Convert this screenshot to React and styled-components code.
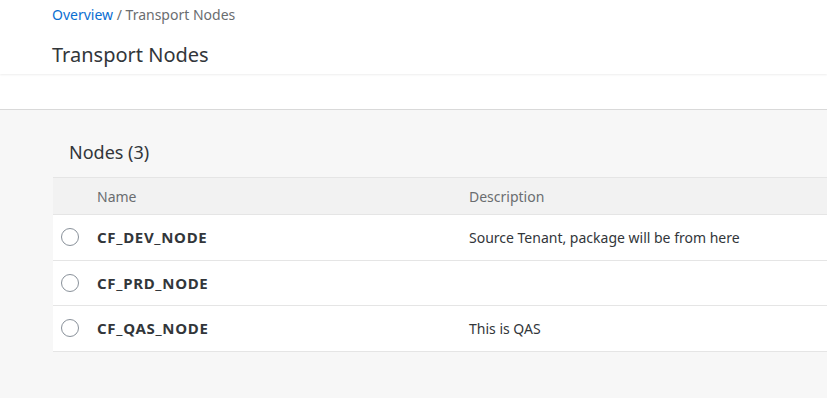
import React from 'react'
import styled, { createGlobalStyle } from 'styled-components'

const GlobalStyle = createGlobalStyle`
  body {
    margin: 0;
    font-family: "Noto Sans", "Open Sans", sans-serif;
    background: #f7f7f7;
    color: #32363a;
  }
`

const Page = styled.div`
  width: 827px;
  height: 398px;
  overflow: hidden;
  background: #f7f7f7;
`

const Header = styled.header`
  background: #fff;
  padding: 5px 0 0 52px;
  height: 74px;
  box-sizing: border-box;
  box-shadow: 0 1px 2px rgba(0, 0, 0, 0.07);
  position: relative;
`

const Crumbs = styled.div`
  font-size: 14px;
  line-height: 20px;
  color: #6a6d70;
`

const CrumbLink = styled.a`
  color: #0a6ed1;
  text-decoration: none;
`

const Title = styled.h1`
  margin: 17px 0 0;
  font-size: 20px;
  font-weight: 400;
  line-height: 26px;
  color: #32363a;
`

const Strip = styled.div`
  height: 35px;
  background: #fff;
  border-bottom: 1px solid #d9d9d9;
`

const Content = styled.section`
  padding: 29px 0 0 53px;
`

const SectionTitle = styled.h2`
  margin: 0 0 0 16px;
  font-size: 18px;
  font-weight: 400;
  line-height: 26px;
  color: #32363a;
  height: 38px;
`

const Table = styled.div`
  border-top: 1px solid #e5e5e5;
`

const Row = styled.div`
  display: grid;
  grid-template-columns: 44px 372px 1fr;
  align-items: center;
  height: ${p => (p.$head ? '36px' : '44.5px')};
  background: ${p => (p.$head ? '#f2f2f2' : '#fff')};
  border-bottom: 1px solid #e5e5e5;
  font-size: 14px;
  color: ${p => (p.$head ? '#6a6d70' : '#32363a')};
`

const Radio = styled.span`
  width: 16px;
  height: 16px;
  border: 1px solid #89919a;
  border-radius: 50%;
  background: #fff;
  margin-left: 8px;
`

const Name = styled.span`
  font-size: 15px;
  font-weight: 700;
  letter-spacing: 0.7px;
  color: #32363a;
`

const nodes = [
  { name: 'CF_DEV_NODE', desc: 'Source Tenant, package will be from here' },
  { name: 'CF_PRD_NODE', desc: '' },
  { name: 'CF_QAS_NODE', desc: 'This is QAS' },
]

export default function App() {
  return (
    <Page>
      <GlobalStyle />
      <Header>
        <Crumbs>
          <CrumbLink href="#">Overview</CrumbLink> / Transport Nodes
        </Crumbs>
        <Title>Transport Nodes</Title>
      </Header>
      <Strip />
      <Content>
        <SectionTitle>Nodes (3)</SectionTitle>
        <Table>
          <Row $head>
            <span />
            <span>Name</span>
            <span>Description</span>
          </Row>
          {nodes.map(n => (
            <Row key={n.name}>
              <Radio />
              <Name>{n.name}</Name>
              <span>{n.desc}</span>
            </Row>
          ))}
        </Table>
      </Content>
    </Page>
  )
}
